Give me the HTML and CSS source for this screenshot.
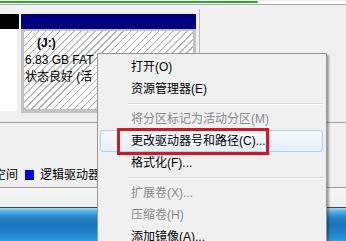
FILE: index.html
```html
<!DOCTYPE html>
<html lang="zh-CN">
<head>
<meta charset="utf-8">
<link rel="stylesheet" href="styles.css">
</head>
<body>
<div class="top"><div class="fill"></div></div>
<div class="panel">
  <div class="disk">
    <div class="col col-a">
      <div class="head head-black"></div>
      <div class="body-white"></div>
    </div>
    <div class="col col-b">
      <div class="head head-navy"></div>
      <div class="body-hatch">
        <div class="line bold">(J:)</div>
        <div class="line">6.83 GB FAT</div>
        <div class="line">状态良好 (活</div>
      </div>
    </div>
  </div>
</div>
<div class="legend-area">
  <div class="legend">
    <span class="legend-first">空间</span>
    <span class="swatch"></span>
    <span class="legend-text">逻辑驱动器</span>
  </div>
</div>
<div class="status"></div>
<div class="desktop"></div>

<div class="menu">
  <div class="item">打开(O)</div>
  <div class="item">资源管理器(E)</div>
  <div class="sep"></div>
  <div class="item disabled">将分区标记为活动分区(M)</div>
  <div class="item hover">更改驱动器号和路径(C)...</div>
  <div class="item">格式化(F)...</div>
  <div class="sep"></div>
  <div class="item disabled">扩展卷(X)...</div>
  <div class="item disabled">压缩卷(H)</div>
  <div class="item">添加镜像(A)...</div>
</div>
<div class="mark"></div>
</body>
</html>
```
FILE: styles.css
```css
html, body {
  margin: 0;
  padding: 0;
}
body {
  width: 346px;
  height: 241px;
  overflow: hidden;
  position: relative;
  background: #f0f0f0;
  font-family: "Liberation Sans", "Noto Sans CJK SC", sans-serif;
  font-size: 12px;
  color: #000;
}
.top {
  height: 3px;
  background: #fff;
  border-bottom: 1px solid #a9a9a9;
}
.fill {
  width: 258px;
  height: 2px;
  margin-top: 1px;
  background: #3f9a3c;
  border-radius: 0 1px 1px 0;
}
.panel {
  height: 113px;
  border-bottom: 1px solid #a3a3a3;
}
.disk {
  margin-top: 4px;
  width: 200px;
  height: 109px;
  border-right: 1px solid #b9b9b9;
  padding-top: 5px;
  box-sizing: border-box;
  display: flex;
  align-items: flex-start;
}
.col-a {
  width: 19px;
}
.col-b {
  width: 175px;
  margin-left: 2px;
}
.head {
  height: 15px;
}
.head-black { background: #000; }
.head-navy { background: #00007f; }
.body-white {
  width: 17px;
  height: 82px;
  background: #fff;
}
.body-hatch {
  box-sizing: border-box;
  height: 84px;
  border: solid #c2c2c2;
  border-width: 2px 3px 4px 3px;
  background: repeating-linear-gradient(135deg, #b0b0b0 0, #b0b0b0 0.8px, #fff 1.2px, #fff 5px);
  padding: 4px 0 0 1px;
  overflow: hidden;
}
.line {
  line-height: 17px;
  height: 17px;
  white-space: nowrap;
}
.bold {
  font-weight: bold;
  padding-left: 12px;
}
.legend-area {
  border-bottom: 1px solid #a0a0a0;
  padding-top: 45px;
  box-sizing: border-box;
  height: 65px;
}
.legend {
  display: flex;
  align-items: center;
  height: 14px;
  line-height: 14px;
  white-space: nowrap;
}
.legend-first {
  width: 18px;
  overflow: hidden;
  direction: rtl;
}
.swatch {
  width: 9px;
  height: 10px;
  background: #0000f0;
  margin-left: 7px;
}
.legend-text {
  margin-left: 6px;
}
.status {
  height: 19px;
  background: linear-gradient(#f6f6f6, #eeeeee);
  border-bottom: 1px solid #384656;
}
.desktop {
  height: 37px;
  background: linear-gradient(180deg, #a6dcf3 0, #5cb6e6 3px, #2a86c8 9px, #1a74be 16px, #1d84c9 25px, #33a8e2 37px);
}
.menu {
  position: absolute;
  left: 97px;
  top: 53px;
  width: 230px;
  box-sizing: border-box;
  border: 1px solid #979797;
  background: #f0f0f0;
  padding: 2px;
  box-shadow: 2px 2px 2px rgba(0, 0, 0, 0.35);
}
.item {
  height: 22px;
  line-height: 22px;
  padding-left: 31px;
  white-space: nowrap;
  box-sizing: border-box;
}
.item.disabled {
  color: #8a8a8a;
}
.item.hover {
  border: 1px solid #b4d0ee;
  border-radius: 3px;
  background: linear-gradient(#f5f8fc, #e9eff8);
  padding-left: 30px;
  line-height: 20px;
  margin-right: 1px;
}
.sep {
  height: 8px;
  margin-left: 28px;
  margin-right: 1px;
  background: linear-gradient(transparent 3px, #dadada 3px, #dadada 4px, #fff 4px, #fff 5px, transparent 5px);
}
.mark {
  position: absolute;
  left: 117px;
  top: 128px;
  width: 152px;
  height: 27px;
  box-sizing: border-box;
  border: 3px solid #cf1a26;
}
```
